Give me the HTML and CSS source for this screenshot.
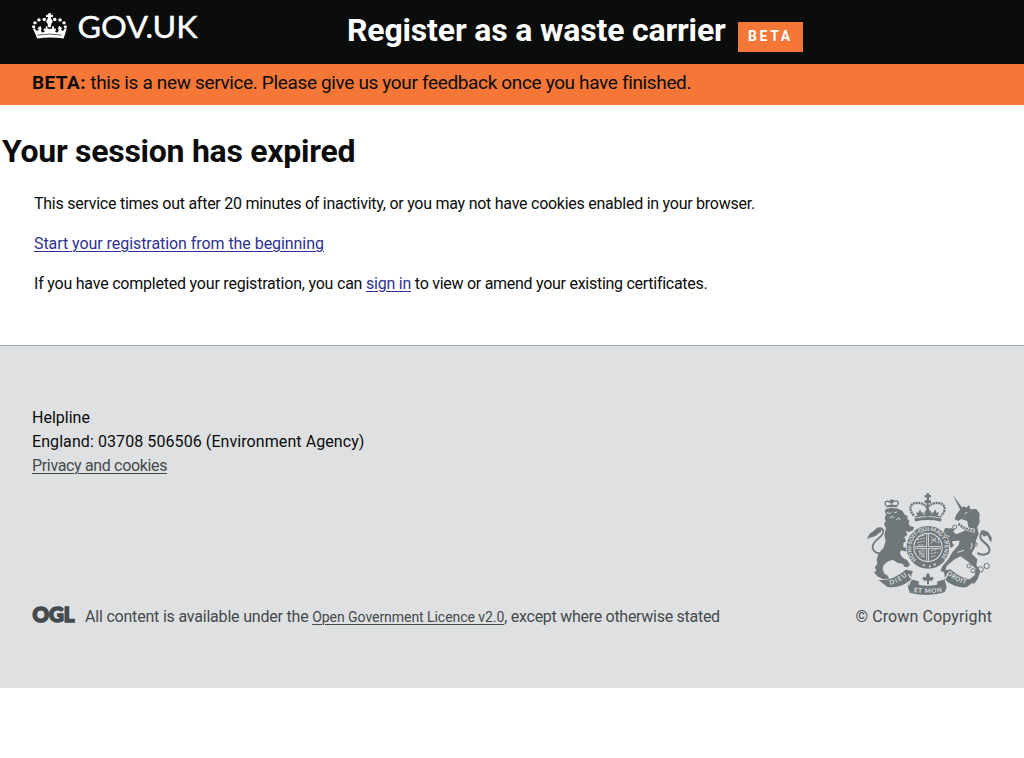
FILE: index.html
```html
<!DOCTYPE html>
<html lang="en">
<head>
<meta charset="utf-8">
<title>Your session has expired</title>
<link rel="stylesheet" href="styles.css">
</head>
<body>
<header class="header">
  <a class="logo" href="#">
    <svg class="crown" viewBox="96 41 106 77" width="35" height="26" aria-hidden="true">
      <g fill="#fff">
        <circle cx="101" cy="82" r="5"/><circle cx="105" cy="70" r="5.2"/><circle cx="117" cy="61" r="5.2"/><circle cx="133" cy="60" r="5.2"/>
        <circle cx="197" cy="82" r="5"/><circle cx="193" cy="70" r="5.2"/><circle cx="181" cy="61" r="5.2"/><circle cx="165" cy="60" r="5.2"/>
        <path d="M145 41h9l-1 5 6-1v8l-6-1 2 7c5 3 5 9 0 13l-2 11h-8l-2-11c-5-4-5-10 0-13l2-7-6 1v-8l6 1z"/>
        <path d="M99 88l6-1 5 8 7-4-5-4 6-5 3-3 4 7-2 9 5 5 8-5-5-2 1-6 5 1 1-8 5 0 0 8h14l0-8 5 0 1 8 5-1 1 6-5 2 8 5 5-5-2-9 4-7 3 3 6 5-5 4 7 4 5-8 6 1-9 29c-26-4-54-4-80 0z"/>
      </g>
      <path d="M113 107q36-6 72 0" fill="none" stroke="#0b0c0c" stroke-width="2"/>
    </svg>
    <svg class="wordmark" viewBox="0 0 126 40" width="126" height="40"><text x="0.5" y="27" textLength="120" lengthAdjust="spacingAndGlyphs">GOV.UK</text></svg>
  </a>
  <div class="service"><span class="service-name">Register as a waste carrier</span><span class="tag">BETA</span></div>
</header>
<div class="beta-bar"><strong>BETA:</strong> <span>this is a new service. Please give us your feedback once you have finished.</span></div>
<main class="content">
  <h1>Your session has expired</h1>
  <p class="timeout">This service times out after 20 minutes of inactivity, or you may not have cookies enabled in your browser.</p>
  <p class="restart"><a href="#">Start your registration from the beginning</a></p>
  <p class="signin">If you have completed your registration, you can <a href="#">sign in</a><span class="rest"> to view or amend your existing certificates.</span></p>
</main>
<footer class="footer">
  <div class="help">
    <div>Helpline</div>
    <div class="phone">England: 03708 506506 (Environment Agency)</div>
    <a class="privacy" href="#">Privacy and cookies</a>
  </div>
  <div class="meta">
    <div class="licence">
      <svg class="ogl" viewBox="0 0 43 24" width="43" height="24"><text x="0.5" y="17" textLength="42" lengthAdjust="spacingAndGlyphs">OGL</text></svg>
      <p><span class="before">All content is available under the </span><a href="#">Open Government Licence v2.0</a><span class="after">, except where otherwise stated</span></p>
    </div>
    <div class="copyright">
      <svg class="arms" viewBox="51 24 375 306" width="125" height="102" aria-hidden="true">
        <defs>
          <path id="motto" d="M200 224A50 50 0 1 1 268 224"/>
          <path id="dieu" d="M121 300Q151 292 177 267"/>
          <path id="mon" d="M191 321Q233 328 279 320"/>
          <path id="droit" d="M290 266Q314 291 352 298"/>
        </defs>
        <!-- crown -->
        <g fill="none" stroke="#6f777b">
          <path d="M192 91C176 76 178 56 198 54c16-2 30 6 34 16 4-10 18-18 34-16 22 3 23 23 8 37" stroke-width="7" stroke-dasharray="6 2"/>
          <path d="M233 52v43" stroke-width="6"/>
          <path d="M194 96q39-9 80 0" stroke-width="5"/>
          <path d="M194 105q39-9 80 0" stroke-width="9"/>
        </g>
        <g fill="#6f777b">
          <path d="M230 24h7v6h6v7h-6v9h-7v-9h-6v-7h6zM224 46h19v8h-19zM201 92l-2-12 6 4 5-11 5 11 6-4-2 12zM246 92l-2-12 6 4 5-11 5 11 6-4-2 12zM222 92l3-13 9-9 8 9 3 13z"/>
          <!-- lion -->
          <path d="M109 67L142 66L143 61Q126 57 108 62z"/>
          <path d="M107 73L121 69L140 70L157 77L163 88L173 94L172 101L179 109L175 115L181 124L192 126L190 135L178 141L168 138L172 150L163 156L168 168L160 175L160 187L176 190L190 200L192 210L180 210L172 200L152 196L150 206L158 218L172 226L180 239L173 247L163 245L158 236L144 234L128 224L112 230L101 240L98 252L103 266L114 272L117 281L98 282L82 274L72 262L79 258L75 246L82 236L80 222L86 205L101 188L107 168L103 150L108 130L102 118L107 108L104 98L109 88L104 80z"/>
        </g>
        <g fill="none" stroke="#6f777b">
          <path d="M94 205C74 207 61 190 72 174c9-13 29-21 28-36-1-10-14-12-22-4" stroke-width="5"/>
          <path d="M108 62c-8-14 4-17 17-8M142 61c8-14-4-17-17-8M125 43v17M119 47h12" stroke-width="4"/>
        </g>
        <path d="M52 163q2-17 16-23 14-14 26-11 4 12-8 16-8 10-17 10-10 2-17 8z" fill="#6f777b"/>
        <path d="M110 82l8 4 6-4M133 83l8-2M119 99l7-5 6 5M138 106l8-8 4 7" fill="none" stroke="#dee0e2" stroke-width="3"/>
        <!-- unicorn -->
        <path d="M308 29l31 42-8 4z" fill="#6f777b"/>
        <path d="M331 73l10-9 8 4 8-8 4 13 18-1 10 14-1 12 1 14-7 15 4 21-7 15-4 24-10 19 17 17-3 17 12 18-7 22-11 16-16-4 4-11 13-10 3-20-22-21-24-16-20 11-21 18-5 18-14-3 7-16 17-19 13-23 18-20 3-13-20 1-15 20-15-4 5-18 15-12-19-13 6-13 15 3 17 17 20-8 17-12-3-20-18-6-9 6-11-5 4-12z" fill="#6f777b"/>
        <path d="M281 145l21-16 13 4-11 12-13 3 7 15 14 17-7 9-22-21z" fill="#6f777b"/>
        <g fill="none" stroke="#6f777b">
          <path d="M382 204c23 12 44-1 34-18-9-16-28-18-25-34 2-13 18-15 24-3l7 17" stroke-width="6"/>
          <circle cx="357" cy="243" r="6" stroke-width="3"/><circle cx="369" cy="257" r="6" stroke-width="3"/><circle cx="392" cy="253" r="8" stroke-width="3"/><circle cx="410" cy="243" r="8" stroke-width="3"/><circle cx="377" cy="178" r="5" stroke-width="3"/>
        </g>
        <path d="M391 137l10 18 12-4 11 22 1-15-11-17-13-5z" fill="#6f777b"/>
        <path d="M327 118q20 17 47 19" fill="none" stroke="#dee0e2" stroke-width="12"/>
        <path d="M325 116q20 19 49 21" fill="none" stroke="#6f777b" stroke-width="8" stroke-dasharray="6 3"/>
        <circle cx="314" cy="126" r="6" fill="none" stroke="#6f777b" stroke-width="3"/>
        <path d="M344 86l8-4M365 174q4 10-3 18M322 202l20-6" stroke="#dee0e2" stroke-width="3" fill="none"/>
        <!-- garter and shield -->
        <circle cx="234" cy="187" r="66" fill="#dee0e2"/>
        <circle cx="234" cy="187" r="54" fill="none" stroke="#6f777b" stroke-width="20"/>
        <circle cx="234" cy="187" r="41" fill="#6f777b"/>
        <path d="M233 147v80M194 187h79" stroke="#dee0e2" stroke-width="8"/>
        <path d="M233 147v80M194 187h79" stroke="#6f777b" stroke-width="3"/>
        <path d="M201 164l23-4M202 173l22-5M205 180h18M207 154l16-3M243 154l17 19M243 176l16-20M243 165h18M266 158v20M242 197l19-4M242 206l20-4M243 216l13-4M204 197l18 17M210 194v20M216 193v25M222 193v25" stroke="#dee0e2" stroke-width="2.5" stroke-dasharray="7 2"/>
        <text class="arms-text motto-text"><textPath href="#motto" textLength="232">HONI·SOIT·QUI·MAL·Y·PENSE</textPath></text>
        <path d="M219 240l5 2M237 244h5M251 240l6-3" stroke="#dee0e2" stroke-width="5"/>
        <!-- ribbons -->
        <path d="M86 285q43 3 81-31l22 4q-8 14-4 24 47 20 98 0 4-11-4-24l22-5q36 33 77 32l-27 21q-31 6-66-20l5 20-6 16q-50 16-105 1l-6-21 5-15q-31 25-67 18z" fill="#6f777b"/>
        <path d="M184 284q-6 5-8 17M285 284q6 6 5 18M176 267q5 16 20 17 39 11 78 0 17-3 19-18" fill="none" stroke="#dee0e2" stroke-width="4"/>
        <path d="M206 299q-2-24 8-42h40q11 18 7 42-29 6-55 0z" fill="#dee0e2"/>
        <path d="M231 298v-12q-11 5-14-6 5-8 12-2-3-7 5-15 8 8 5 15 8-6 12 2-3 11-14 6v12zM222 282h24v4h-24z" fill="#6f777b"/>
        <text class="arms-text"><textPath href="#dieu" textLength="58">DIEU</textPath></text>
        <text class="arms-text"><textPath href="#mon" textLength="86">ET MON</textPath></text>
        <text class="arms-text"><textPath href="#droit" textLength="66">DROIT</textPath></text>
      </svg>
      <span class="crown-copy">© Crown Copyright</span>
    </div>
  </div>
</footer>
</body>
</html>
```
FILE: styles.css
```css
* { box-sizing: border-box; }
body { margin: 0; background: #fff; color: #0b0c0c; font: 16px/24px Roboto, sans-serif; font-variant-ligatures: none; white-space: nowrap; }
svg { overflow: visible; flex: none; }
p, h1 { margin: 0; }
.header { display: flex; height: 64px; background: #0b0c0c; color: #fff; padding-left: 32px; }
.logo { display: flex; width: 315px; color: #fff; text-decoration: none; }
.crown { margin-top: 13px; }
.wordmark { margin: 11px 0 0 10px; }
.wordmark text { font: 400 30px Lato, sans-serif; fill: #fff; stroke: #fff; stroke-width: .4px; }
.service { display: flex; }
.service-name { font-size: 32px; font-weight: 700; line-height: 60px; width: 391px; letter-spacing: -.17px; }
.tag { width: 65px; height: 30px; margin-top: 22px; padding-left: 10px; background: #f47738; font-size: 14px; line-height: 29px; font-weight: 700; letter-spacing: 2.6px; }
.beta-bar { height: 41px; padding-left: 32px; background: #f47738; font-size: 19px; line-height: 38px; letter-spacing: -.35px; }
.beta-bar strong { letter-spacing: .4px; }
.content { height: 240px; padding: 26px 0 0 2px; }
.content h1 { font-size: 32px; line-height: 40px; margin-bottom: 21px; letter-spacing: -.27px; }
.content p { margin: 0 0 16px 32px; }
.content a { color: #2e3191; }
.content .timeout { letter-spacing: -.255px; }
.content .restart { letter-spacing: -.06px; }
.content .signin { letter-spacing: -.215px; }
.content .rest { letter-spacing: -.275px; }
a { text-underline-offset: 2px; text-decoration-thickness: 1px; }
.footer { height: 343px; padding: 60px 32px 0; background: #dee0e2; border-top: 1px solid #a1acb2; display: flex; flex-direction: column; }
.help { position: relative; }
.privacy, .meta, .meta a { color: #454a4c; }
.phone { letter-spacing: .08px; }
.privacy { letter-spacing: -.34px; }
.meta { display: flex; justify-content: space-between; align-items: flex-end; margin-top: 15px; }
.licence { display: flex; gap: 10px; align-items: flex-start; }
.ogl text { font: 900 21px Lato, sans-serif; fill: #454a4c; stroke: #454a4c; stroke-width: 1.6px; }
.licence a { font-size: 14px; letter-spacing: -.05px; }
.licence .before { letter-spacing: -.2px; }
.licence .after { letter-spacing: -.28px; }
.copyright { display: flex; flex-direction: column; align-items: flex-end; }
.arms { margin-bottom: 10px; }
.arms-text { font: 700 19px Lato, sans-serif; fill: #dee0e2; }
.motto-text { font-size: 17px; }
.crown-copy { letter-spacing: .12px; }
```
